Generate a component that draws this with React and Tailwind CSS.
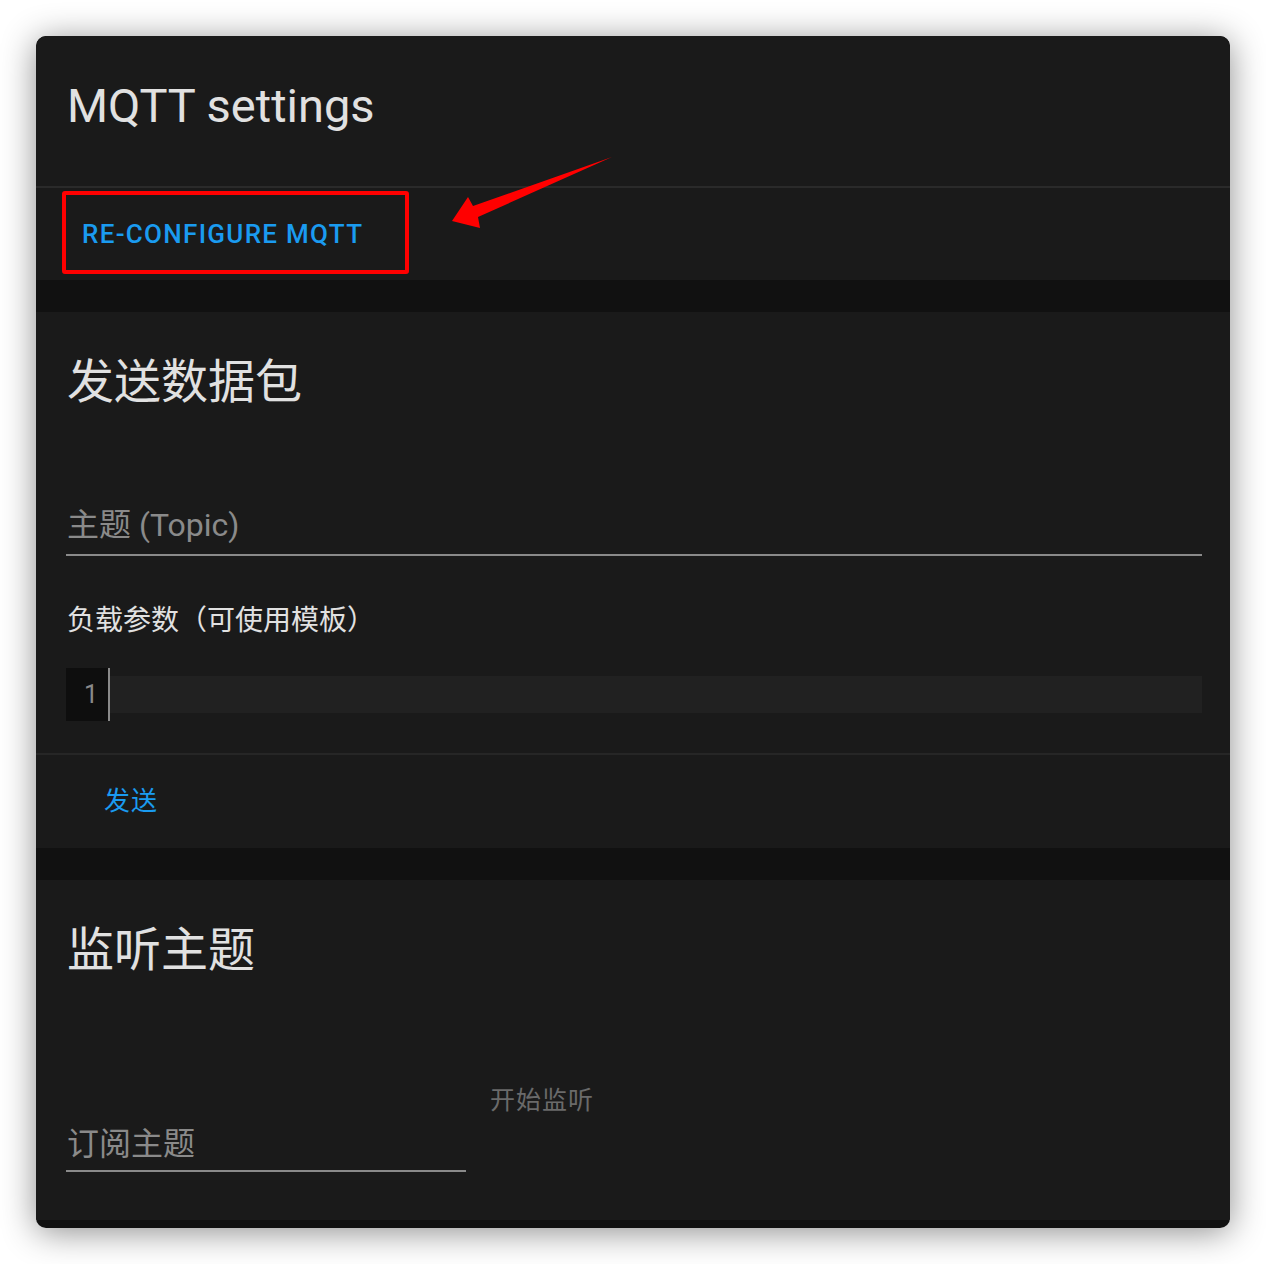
import React from 'react';

const sans = { fontFamily: 'Roboto, "Noto Sans CJK SC", sans-serif' };

function Card({ children, className = '' }) {
  return <div className={`bg-[#1a1a1a] ${className}`}>{children}</div>;
}

function CardTitle({ children }) {
  return (
    <h1 className="px-[31px] pt-[38px] text-[47px] leading-[64px] font-normal text-[#e1e1e1]">
      {children}
    </h1>
  );
}

export default function App() {
  return (
    <div className="min-h-screen bg-white p-[36px]" style={sans}>
      <div className="relative w-[1194px] h-[1192px] rounded-[10px] overflow-hidden bg-[#111111] shadow-[0_4px_34px_rgba(0,0,0,0.45)] flex flex-col gap-[32px]">
        {/* MQTT settings */}
        <Card className="rounded-t-[10px]">
          <div className="h-[150px]">
            <CardTitle>MQTT settings</CardTitle>
          </div>
          <div className="h-[94px] border-t-2 border-[#2a2a2a] pt-[3px]">
            <div className="ml-[26px] w-[347px] h-[83px] border-[4px] border-[#ff0000] rounded-[3px] flex items-center pl-[16px] pt-[2px]">
              <button className="text-[26px] font-medium tracking-[1.3px] text-[#1a9bf0] leading-none">
                RE-CONFIGURE MQTT
              </button>
            </div>
          </div>
        </Card>

        {/* 发送数据包 */}
        <Card>
          <div className="h-[441px] pl-[30px] pr-[28px]">
            <div className="-ml-[30px] -mr-[28px]">
              <CardTitle>发送数据包</CardTitle>
            </div>
            <div className="mt-[75px] h-[67px] flex items-end border-b-2 border-[#8a8a8a]">
              <span className="text-[32px] leading-[58px] text-[#8a8a8a] pl-px">主题 (Topic)</span>
            </div>
            <div className="mt-[47px] text-[28px] leading-[36px] text-[#e1e1e1] pl-px">
              负载参数（可使用模板）
            </div>
            <div className="mt-[29px] flex h-[53px]">
              <div className="w-[42px] bg-[#0e0e0e] flex items-center justify-end pr-[10px] text-[25px] text-[#8a8a8a]">
                1
              </div>
              <div className="w-[2px] bg-[#8a8a8a]" />
              <div className="flex-1 flex items-center">
                <div className="w-full h-[37px] bg-[#212121]" />
              </div>
            </div>
          </div>
          <div className="h-[95px] border-t-2 border-[#262626] flex items-center pl-[68px]">
            <button className="text-[26px] text-[#1a9bf0] tracking-[1px]">发送</button>
          </div>
        </Card>

        {/* 监听主题 */}
        <Card className="h-[340px]">
          <CardTitle>监听主题</CardTitle>
          <div className="mt-[90px] px-[30px] flex items-start">
            <div className="w-[400px] mt-[44px] h-[56px] flex items-end border-b-2 border-[#8a8a8a]">
              <span className="text-[32px] leading-[52px] text-[#8a8a8a] pl-px">订阅主题</span>
            </div>
            <button className="ml-[24px] mt-[11px] text-[25px] leading-[36px] tracking-[1px] text-[#6a6a6a]">
              开始监听
            </button>
          </div>
        </Card>

        {/* annotation arrow */}
        <svg
          className="absolute left-0 top-0 pointer-events-none"
          width="1194"
          height="300"
          viewBox="36 36 1194 300"
        >
          <polygon
            points="452,221 468,197 473,206 612,157 478,217 480,228"
            fill="#ff0000"
          />
        </svg>
      </div>
    </div>
  );
}
